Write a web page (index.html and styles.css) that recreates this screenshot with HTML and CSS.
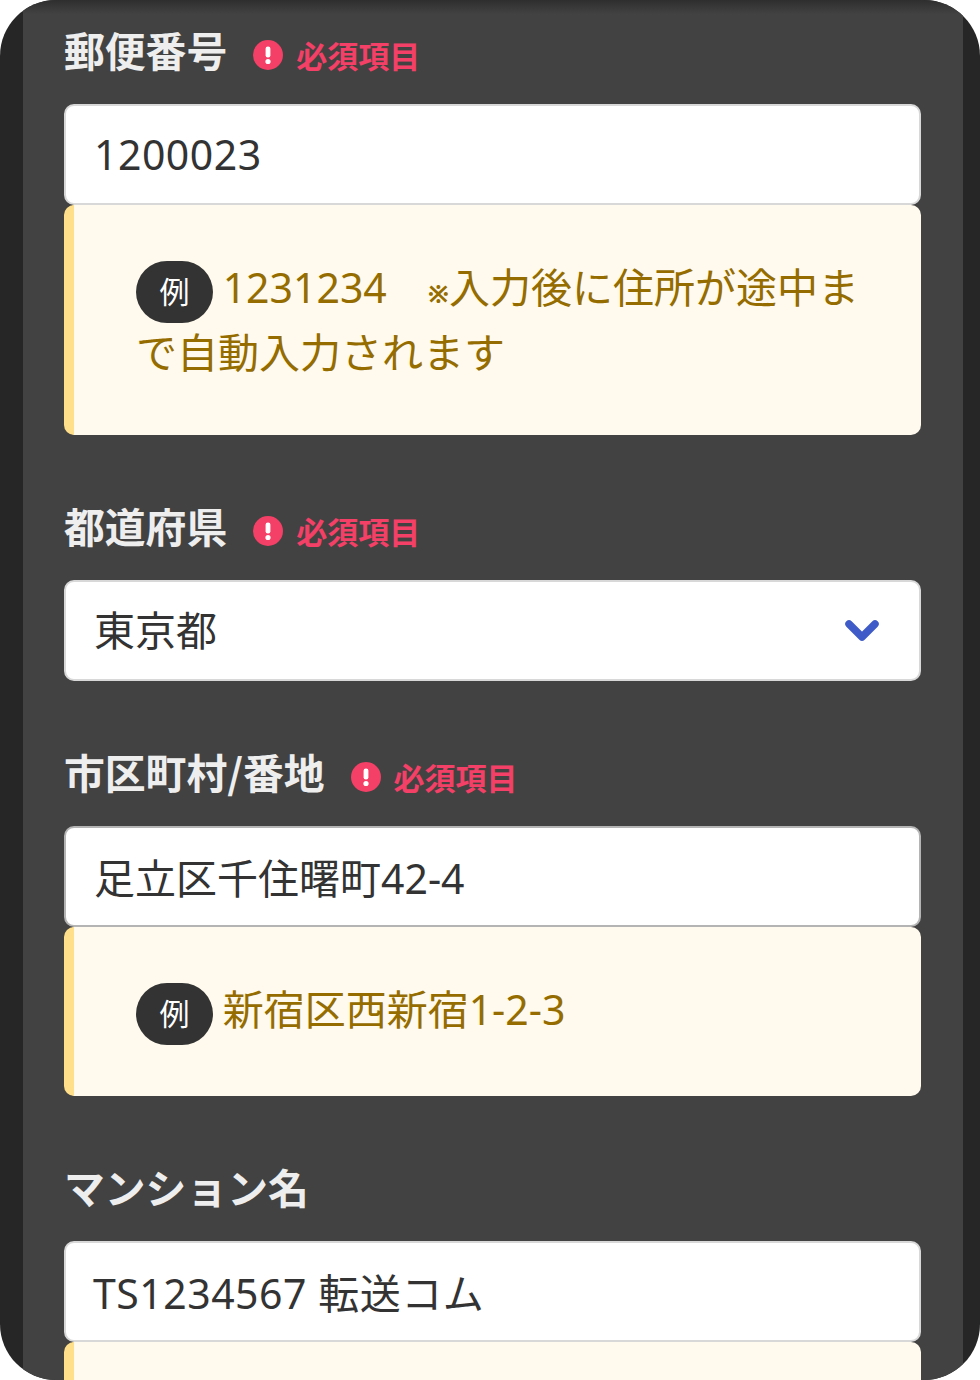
FILE: index.html
```html
<!DOCTYPE html>
<html lang="ja">
<head>
    <meta charset="UTF-8">
    <meta name="viewport" content="width=device-width, initial-scale=1.0">
    <title>住所入力フォーム</title>
    <link rel="stylesheet" href="styles.css">
</head>
<body>
    <div class="frame">
        <form class="screen">
            <!-- 郵便番号 -->
            <div class="field">
                <label class="field-label" for="zip">郵便番号
                    <span class="required">
                        <svg class="required-icon" viewBox="0 0 30 30"><circle cx="15" cy="15" r="15" fill="#f43f66"/><rect x="12.6" y="6.5" width="4.8" height="11" rx="2.2" fill="#fff"/><circle cx="15" cy="21.5" r="2.6" fill="#fff"/></svg>
                        必須項目
                    </span>
                </label>
                <input class="control control-latin" type="text" id="zip" value="1200023">
                <p class="note"><span class="badge">例</span> 1231234　<span class="mark">※</span>入力後に住所が途中まで自動入力されます</p>
            </div>

            <!-- 都道府県 -->
            <div class="field">
                <label class="field-label" for="pref">都道府県
                    <span class="required">
                        <svg class="required-icon" viewBox="0 0 30 30"><circle cx="15" cy="15" r="15" fill="#f43f66"/><rect x="12.6" y="6.5" width="4.8" height="11" rx="2.2" fill="#fff"/><circle cx="15" cy="21.5" r="2.6" fill="#fff"/></svg>
                        必須項目
                    </span>
                </label>
                <div class="select-wrap">
                    <select class="control" id="pref">
                        <option>東京都</option>
                    </select>
                    <svg class="chevron" viewBox="0 0 34 24"><path d="M4 5 L17 18 L30 5" fill="none" stroke="#3f5bc8" stroke-width="7.5" stroke-linecap="round" stroke-linejoin="round"/></svg>
                </div>
            </div>

            <!-- 市区町村/番地 -->
            <div class="field">
                <label class="field-label" for="addr">市区町村/番地
                    <span class="required">
                        <svg class="required-icon" viewBox="0 0 30 30"><circle cx="15" cy="15" r="15" fill="#f43f66"/><rect x="12.6" y="6.5" width="4.8" height="11" rx="2.2" fill="#fff"/><circle cx="15" cy="21.5" r="2.6" fill="#fff"/></svg>
                        必須項目
                    </span>
                </label>
                <input class="control control-dark" type="text" id="addr" value="足立区千住曙町42-4">
                <p class="note"><span class="badge">例</span> 新宿区西新宿1-2-3</p>
            </div>

            <!-- マンション名 -->
            <div class="field">
                <label class="field-label" for="building">マンション名</label>
                <input class="control control-latin control-tight" type="text" id="building" value="TS1234567 転送コム">
                <p class="note"></p>
            </div>
        </form>
    </div>
</body>
</html>
```

FILE: styles.css
```css
html, body {
    margin: 0;
    height: 1380px;
    overflow: hidden;
    background: #fff;
}
body {
    font-family: "Noto Sans", "Noto Sans CJK JP", sans-serif;
}
.frame {
    height: 1380px;
    padding: 0 17px 0 23px;
    box-sizing: border-box;
    background: #262626;
    border-radius: 56px;
    overflow: hidden;
}
.screen {
    height: 100%;
    box-sizing: border-box;
    padding: 29px 42px 0 41px;
    background: linear-gradient(#2e2e2e, #424242 14px);
}
.field {
    margin-bottom: 70px;
}
.field-label {
    display: flex;
    align-items: center;
    height: 48px;
    box-sizing: border-box;
    padding-bottom: 6px;
    margin-bottom: 27px;
    color: #eeeeee;
    font-family: "Noto Sans CJK JP", sans-serif;
    font-size: 40.8px;
    font-weight: 700;
    line-height: 42px;
    white-space: nowrap;
}
.required {
    display: flex;
    align-items: center;
    margin: 10px 0 0 26px;
    color: #f43f66;
    font-size: 31px;
    font-weight: 700;
}
.required-icon {
    width: 30px;
    height: 30px;
    margin-right: 13px;
}
.control {
    display: block;
    width: 100%;
    height: 101px;
    box-sizing: border-box;
    padding: 0 28px 1px;
    background: #fff;
    border: 2px solid #d8d8d8;
    border-radius: 10px;
    color: #333;
    font-family: inherit;
    font-size: 41px;
    outline: none;
    appearance: none;
}
.control-latin {
    letter-spacing: 0.5px;
}
.control-dark {
    border-color: #b4b4b4;
}
.control-tight {
    padding-left: 27px;
}
.select-wrap {
    position: relative;
}
.chevron {
    position: absolute;
    top: 39px;
    right: 42px;
    width: 34px;
    height: 24px;
}
.note {
    margin: 0;
    min-height: 169px;
    box-sizing: border-box;
    padding: 50px 50px 50px 62px;
    background: #fffaed;
    border-left: 10px solid #ffdf8a;
    border-radius: 10px;
    color: #946c00;
    font-size: 41px;
    line-height: 65px;
}
.badge {
    display: inline-block;
    width: 77px;
    height: 62px;
    margin: -4px -1px -4px 0;
    background: #333;
    border-radius: 31px;
    color: #fff;
    font-size: 30px;
    line-height: 62px;
    text-align: center;
    vertical-align: middle;
}
.mark {
    font-size: 25px;
    font-weight: 700;
    line-height: 1;
}
```
